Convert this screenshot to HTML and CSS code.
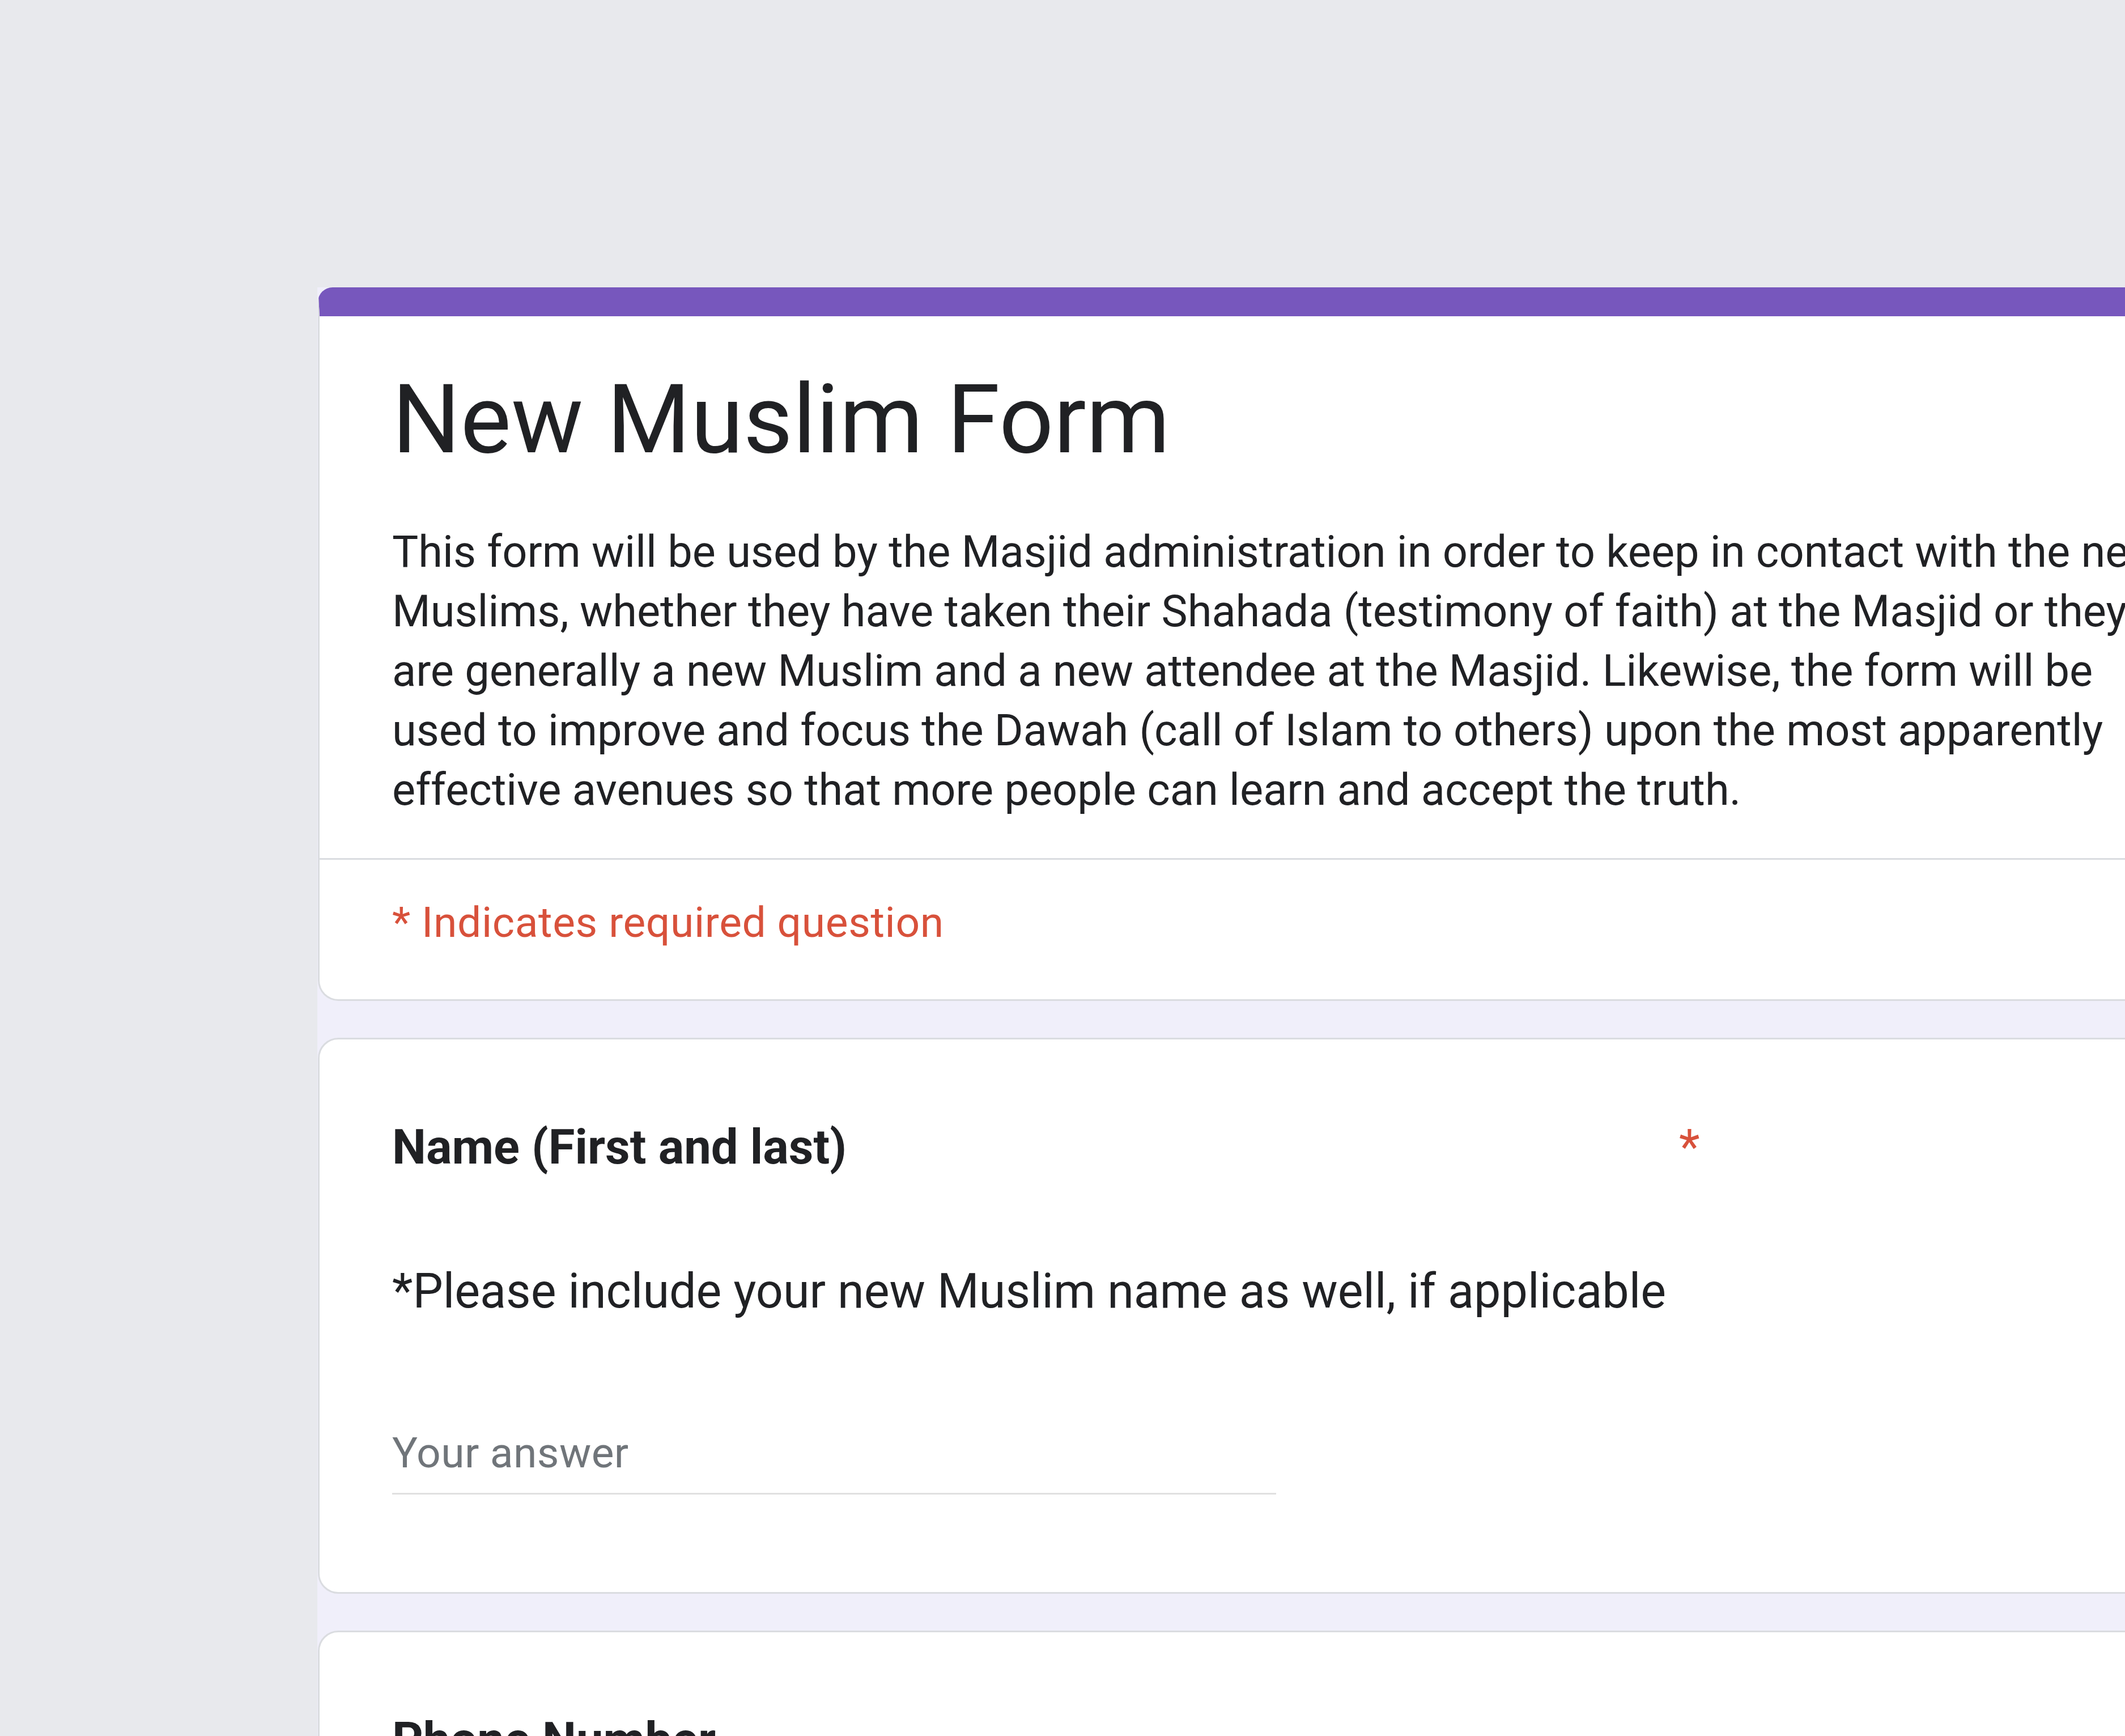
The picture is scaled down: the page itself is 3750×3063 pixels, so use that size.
FILE: index.html
```html
<!DOCTYPE html>
<html lang="en">
<head>
<meta charset="utf-8">
<title>New Muslim Form</title>
<link rel="stylesheet" href="styles.css">
</head>
<body>
<div class="form">
  <section class="card card-header">
    <div class="header-main">
      <h1 class="form-title">New Muslim Form</h1>
      <p class="form-desc">This form will be used by the Masjid administration in order to keep in contact with the new<br>Muslims, whether they have taken their Shahada (testimony of faith) at the Masjid or they<br>are generally a new Muslim and a new attendee at the Masjid. Likewise, the form will be<br>used to improve and focus the Dawah (call of Islam to others) upon the most apparently<br>effective avenues so that more people can learn and accept the truth.</p>
    </div>
    <div class="legend">* Indicates required question</div>
  </section>

  <section class="card question">
    <div class="q-head">
      <span class="q-text">Name (First and last)</span>
      <span class="req">*</span>
    </div>
    <div class="q-desc">*Please include your new Muslim name as well, if applicable</div>
    <div class="answer">Your answer</div>
  </section>

  <section class="card question">
    <div class="q-head">
      <span class="q-text">Phone Number</span>
    </div>
    <div class="q-desc">&nbsp;</div>
  </section>
</div>
</body>
</html>
```

FILE: styles.css
```css
html, body {
  margin: 0;
  padding: 0;
}

body {
  background: #e8e9ed;
  font-family: Roboto, "Liberation Sans", Arial, sans-serif;
  color: #202124;
  overflow: hidden;
  width: 3750px;
  height: 3063px;
}

.form {
  margin-left: 560px;
  margin-top: 507px;
  width: 3500px;
  background: #f0effa;
  display: flex;
  flex-direction: column;
  gap: 65px;
  padding-bottom: 400px;
}

.card {
  background: #ffffff;
  border: 3px solid #dadce0;
  border-radius: 36px;
  margin-left: 1px;
  width: 3413px;
  box-sizing: border-box;
}

.card-header {
  border-top: 51px solid #7757bd;
  border-radius: 26px 26px 36px 36px;
}

.header-main {
  padding: 76px 128px 68px 128px;
}

.form-title {
  margin: 0;
  font-size: 169px;
  line-height: 212px;
  font-weight: 400;
  color: #202124;
  white-space: nowrap;
}

.form-desc {
  margin: 75px 0 0 0;
  font-size: 77.6px;
  line-height: 105px;
  color: #202124;
  white-space: nowrap;
}

.legend {
  border-top: 3px solid #dadce0;
  padding: 60px 128px 86px 128px;
  font-size: 75px;
  line-height: 100px;
  letter-spacing: 0.6px;
  color: #d8513b;
}

.question {
  padding: 126px 128px 172px 128px;
}

.q-head {
  display: flex;
  align-items: flex-start;
  font-size: 85px;
  line-height: 128px;
  font-weight: 700;
  color: #202124;
}

.q-text {
  width: 2271px;
  white-space: nowrap;
}

.req {
  color: #d8513b;
  font-weight: 400;
}

.q-desc {
  margin-top: 127px;
  font-size: 84.5px;
  line-height: 128px;
  color: #202124;
  white-space: nowrap;
}

.answer {
  margin-top: 170px;
  width: 1560px;
  font-size: 75px;
  line-height: 100px;
  letter-spacing: 0.4px;
  padding-bottom: 21px;
  border-bottom: 3px solid #e0e0e0;
  color: #70757a;
}
```
